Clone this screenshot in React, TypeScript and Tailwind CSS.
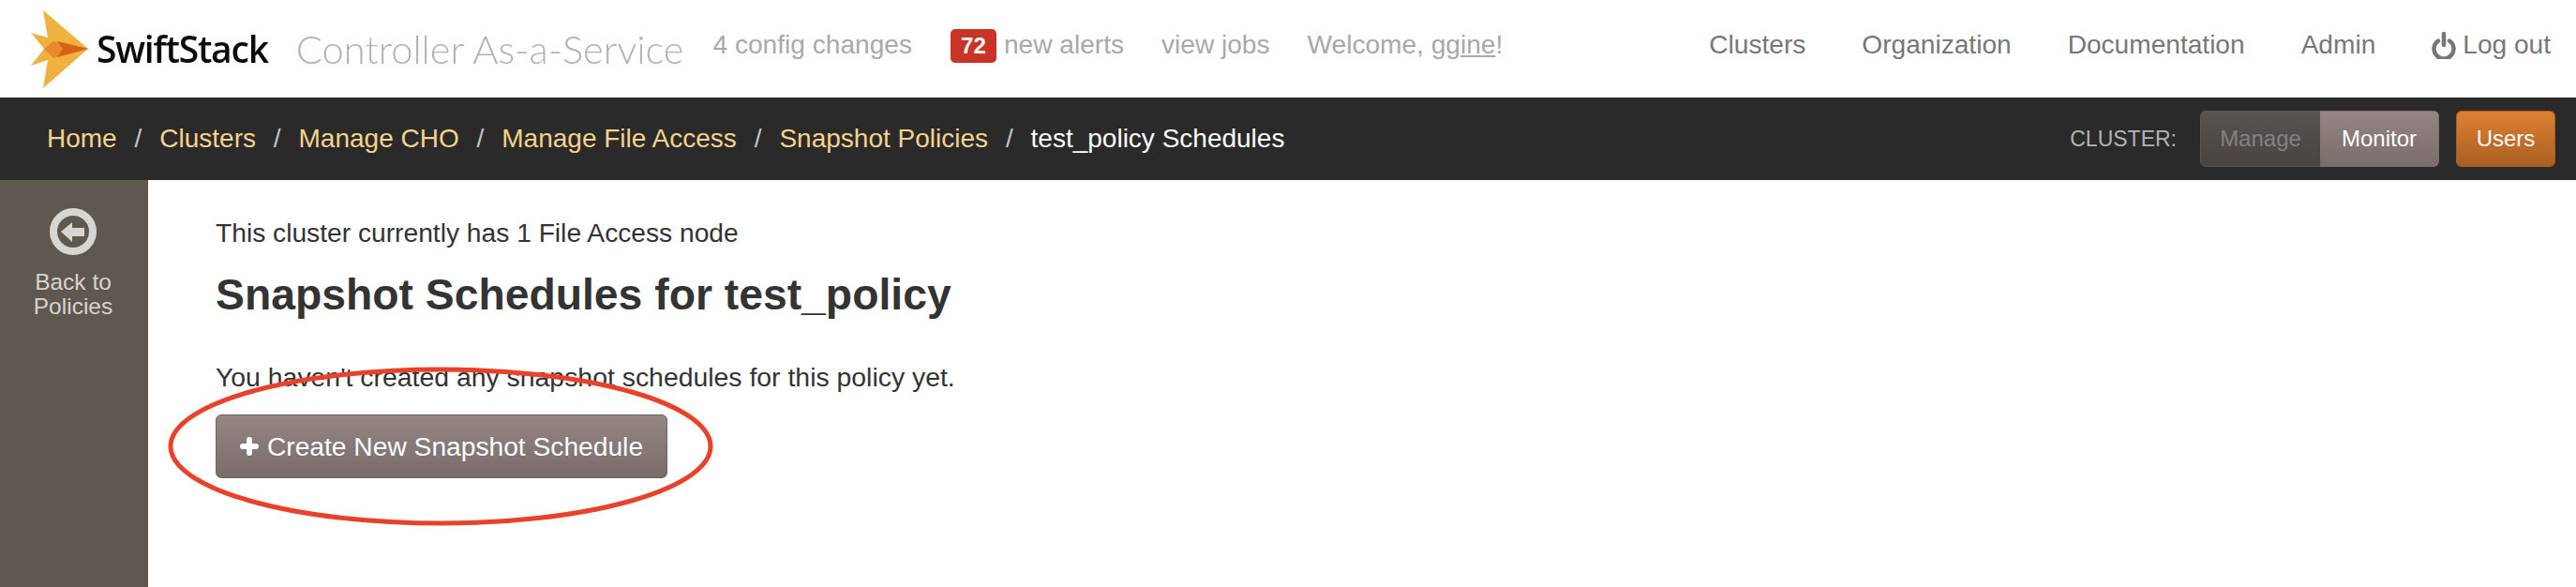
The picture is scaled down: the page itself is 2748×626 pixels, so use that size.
const crumbs = ["Home", "Clusters", "Manage CHO", "Manage File Access", "Snapshot Policies"]

function Logo() {
  return (
    <div className="flex items-center">
      <svg width="61" height="83" viewBox="0 0 61 83" className="blur-[0.4px]">
        <polygon points="13,0 61,41 13,83 18,53 0,59 14,41 0,24 18,29" fill="#efb23f" />
        <polygon points="14,41 24,33 61,41 24,51" fill="#e88a2c" />
        <polygon points="28,33 61,41 28,50 34,41" fill="#d9601b" />
      </svg>
      <span className="ml-[9px] font-['Open_Sans'] text-[39px] font-semibold tracking-[-1.2px] text-[#0c0c0c] blur-[0.4px]">SwiftStack</span>
    </div>
  )
}

function Header() {
  return (
    <header className="flex h-[104px] items-center pl-[33px] pr-[27px] text-[28.1px]">
      <Logo />
      <span className="ml-[30px] font-['Lato'] text-[41.6px] font-light text-[#b2b2b2] blur-[0.3px]">Controller As-a-Service</span>
      <div className="ml-[31px] flex items-center pb-[8px] text-[#a9a9a9]">
        <span>4 config changes</span>
        <span className="ml-[41px] flex h-[36px] w-[49px] translate-y-[1px] items-center justify-center rounded-[5px] bg-[#c93427] text-[24px] font-bold text-white">72</span>
        <span className="ml-[8px]">new alerts</span>
        <span className="ml-[40px]">view jobs</span>
        <span className="ml-[40px]">Welcome, gg<span className="underline">ine</span>!</span>
      </div>
      <nav className="ml-auto flex items-center gap-[60px] pb-[8px] text-[#777777]">
        <span>Clusters</span>
        <span>Organization</span>
        <span>Documentation</span>
        <span>Admin</span>
        <span className="flex items-center gap-[7px]">
          <svg width="26" height="30" viewBox="0 0 26 30" fill="none" stroke="#777777" strokeWidth="4.5" strokeLinecap="round">
            <path d="M7 10.5a10.5 10.5 0 1 0 12 0" />
            <path d="M13 3v12" />
          </svg>
          Log out
        </span>
      </nav>
    </header>
  )
}

function Crumbs() {
  return (
    <div className="flex h-[88px] items-center bg-[#2a2a2a] pl-[50px] pr-[22px] text-[28px]">
      {crumbs.map((c) => (
        <span key={c} className="flex items-center">
          <span className="text-[#f6d28c]">{c}</span>
          <span className="mx-[18.9px] text-[#c4c4c4]">/</span>
        </span>
      ))}
      <span className="text-white">test_policy Schedules</span>
      <div className="ml-auto flex items-center text-[24px]">
        <span className="text-[23px] text-[#b3b3b3]">CLUSTER:</span>
        <div className="ml-[25px] flex h-[60px] overflow-hidden rounded-[6px]">
          <span className="flex w-[128px] items-center justify-center border border-r-0 border-[#5d5655] bg-gradient-to-b from-[#585251] to-[#494342] text-[#858180]">Manage</span>
          <span className="flex w-[127px] items-center justify-center border border-l-0 border-[#7f7170] bg-gradient-to-b from-[#948685] to-[#7a6c6b] text-white">Monitor</span>
        </div>
        <span className="ml-[18px] flex h-[60px] w-[106px] items-center justify-center rounded-[6px] border border-[#a95e22] bg-gradient-to-b from-[#de8034] to-[#ab5f22] text-white">Users</span>
      </div>
    </div>
  )
}

function Sidebar() {
  return (
    <aside className="flex w-[158px] shrink-0 flex-col items-center bg-[#5f5850] pr-[2px] pt-[30px] text-center text-[24.5px] leading-[26px] text-[#d6d4cf]">
      <svg width="50" height="50" viewBox="0 0 50 50">
        <circle cx="25" cy="25" r="21" fill="none" stroke="#d8d6d2" strokeWidth="8" />
        <path d="M12 25 L24 15 V21 H37 V30 H24 V36 Z" fill="#d8d6d2" />
      </svg>
      <span className="mt-[16px]">Back to<br />Policies</span>
    </aside>
  )
}

export default function App() {
  return (
    <div className="flex h-[626px] flex-col overflow-hidden bg-white font-['Liberation_Sans',sans-serif]">
      <Header />
      <Crumbs />
      <div className="flex flex-1">
        <Sidebar />
        <main className="relative flex-1 pl-[72px] pt-[36px] text-[28.2px] text-[#333333]">
          <p className="leading-[40px]">This cluster currently has 1 File Access node</p>
          <h1 className="mt-[20px] text-[46.3px] font-bold leading-[52px]">Snapshot Schedules for test_policy</h1>
          <p className="mt-[42px] text-[28.4px] leading-[40px]">You haven't created any snapshot schedules for this policy yet.</p>
          <button className="mt-[20px] flex h-[68px] w-[482px] items-center justify-center gap-[9px] rounded-[6px] border border-[#6f6261] bg-gradient-to-b from-[#948685] to-[#7a6c6b] text-white">
            <svg width="20" height="20" viewBox="0 0 20 20" stroke="white" strokeWidth="6" strokeLinecap="round">
              <path d="M10 3v14M3 10h14" />
            </svg>
            Create New Snapshot Schedule
          </button>
          {/* hand drawn annotation circling the button */}
          <svg width="590" height="176" viewBox="0 0 590 176" className="absolute left-[17px] top-[196px]" fill="none">
            <ellipse cx="295" cy="88" rx="288" ry="82" stroke="#e8432a" strokeWidth="5" />
          </svg>
        </main>
      </div>
    </div>
  )
}
